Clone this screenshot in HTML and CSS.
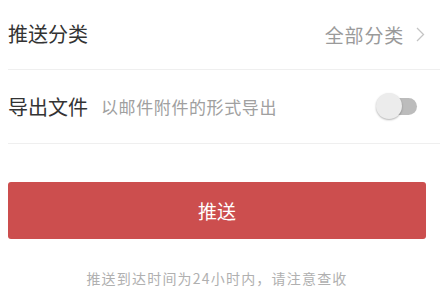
FILE: index.html
```html
<!DOCTYPE html>
<html lang="zh">
<head>
<meta charset="utf-8">
<link rel="stylesheet" href="styles.css">
</head>
<body>
<div class="page">
  <div class="row row-first">
    <span class="label">推送分类</span>
    <span class="value">全部分类</span>
    <svg class="chevron" width="9" height="15" viewBox="0 0 9 15"><path d="M1 1 L7.5 7.5 L1 14" fill="none" stroke="#c4c4c4" stroke-width="1.3"/></svg>
  </div>
  <div class="row row-second">
    <span class="label">导出文件</span>
    <span class="sub">以邮件附件的形式导出</span>
    <span class="toggle"><span class="track"></span><span class="knob"></span></span>
  </div>
  <div class="actions">
    <button class="push">推送</button>
    <p class="note">推送到达时间为24小时内，请注意查收</p>
  </div>
</div>
</body>
</html>
```
FILE: styles.css
```css
html, body { margin: 0; padding: 0; background: #fff; }
body { font-family: "Noto Sans CJK SC", "Noto Sans", sans-serif; width: 440px; height: 303px; overflow: hidden; }
.page { padding-left: 8px; }
.row { display: flex; align-items: center; border-bottom: 1px solid #efefef; padding-right: 14px; }
.row-first { height: 68px; padding-bottom: 1px; }
.row-second { height: 73px; }
.label { font-size: 20px; color: #333; line-height: 1; }
.value { margin-left: auto; font-size: 19px; letter-spacing: 0.8px; color: #9a9a9a; line-height: 1; }
.chevron { margin-left: 12px; margin-right: 1px; }
.sub { margin-left: 13px; font-size: 17px; color: #a0a0a0; line-height: 1; letter-spacing: 0.6px; }
.toggle { margin-left: auto; position: relative; width: 42px; height: 27px; margin-right: 8px; }
.track { position: absolute; left: 8px; top: 5px; width: 33px; height: 17px; border-radius: 9px; background: #bcbcbc; }
.knob { position: absolute; left: 0; top: 0; width: 26px; height: 26px; border-radius: 50%; background: #ececec; box-shadow: 0 1px 2px rgba(0,0,0,0.3); }
.actions { padding-right: 14px; padding-top: 38px; display: flex; flex-direction: column; }
.push { height: 57px; border: none; border-radius: 3px; background: #cc4e4e; color: #fff; font-family: inherit; font-size: 19px; padding: 0; }
.note { margin: 29px 0 0; text-align: center; font-size: 14px; color: #b0b0b0; line-height: 20px; letter-spacing: 1.2px; }
```
